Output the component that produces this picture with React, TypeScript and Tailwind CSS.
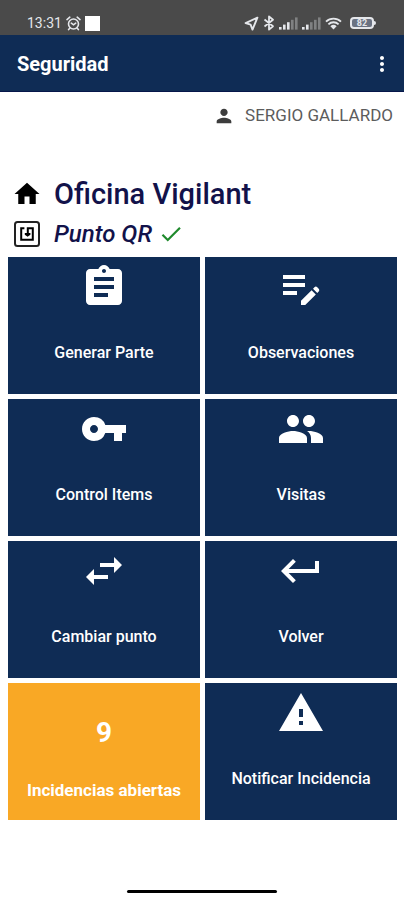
import type { IconType } from 'react-icons';
import {
  MdAssignment,
  MdBluetooth,
  MdCheck,
  MdEditNote,
  MdHome,
  MdKeyboardReturn,
  MdMoreVert,
  MdPeople,
  MdPerson,
  MdSwapHoriz,
  MdVpnKey,
  MdWarning,
} from 'react-icons/md';

interface Action {
  label: string;
  icon: IconType;
}

const actions: Action[] = [
  { label: 'Generar Parte', icon: MdAssignment },
  { label: 'Observaciones', icon: MdEditNote },
  { label: 'Control Items', icon: MdVpnKey },
  { label: 'Visitas', icon: MdPeople },
  { label: 'Cambiar punto', icon: MdSwapHoriz },
  { label: 'Volver', icon: MdKeyboardReturn },
];

function AlarmIcon() {
  return (
    <svg width="15" height="15" viewBox="0 0 15 15" fill="none" stroke="currentColor" strokeWidth="1.6" strokeLinecap="round">
      <circle cx="7.5" cy="8" r="5" />
      <path d="M1 3.6 3.8 1.2M14 3.6 11.2 1.2M3.8 12.2 2.6 13.6M11.2 12.2l1.2 1.4M5.3 7.2l2.2 1.6 2.2-1.6" />
    </svg>
  );
}

function LocationIcon() {
  return (
    <svg width="15" height="15" viewBox="0 0 15 15" fill="none" stroke="currentColor" strokeWidth="1.9" strokeLinejoin="round">
      <path d="M13.4 1.6 1.6 7.2l5 1.4 1.9 5z" />
    </svg>
  );
}

function BluetoothIcon() {
  return (
    <svg width="12" height="16" viewBox="0 0 12 16" fill="none" stroke="currentColor" strokeWidth="1.8" strokeLinejoin="round">
      <path d="M1.5 4.5 10 11.2 6 14.6V1.4l4 3.4-8.5 6.7" />
    </svg>
  );
}

function SignalIcon({ level }: { level: number }) {
  return (
    <svg width="19" height="13" viewBox="0 0 19 13" fill="currentColor">
      {[0, 1, 2, 3, 4].map((i) => (
        <rect key={i} x={i * 4} y={10 - i * 2.4} width="2.6" height={2.6 + i * 2.4} opacity={i < level ? 1 : 0.35} />
      ))}
    </svg>
  );
}

function WifiIcon() {
  return (
    <svg width="17" height="13" viewBox="0 0 17 13" fill="none" stroke="currentColor" strokeWidth="1.8">
      <path d="M1 4.6a11 11 0 0 1 15 0M3.4 7.3a7.4 7.4 0 0 1 10.2 0" />
      <path d="M8.5 12.5 5.4 9.2a4.6 4.6 0 0 1 6.2 0z" fill="currentColor" stroke="none" />
    </svg>
  );
}

function TagIcon() {
  return (
    <svg width="30" height="30" viewBox="0 0 30 30" fill="none" stroke="black" strokeWidth="2">
      <rect x="3" y="3" width="24" height="24" rx="2.5" stroke="#222" />
      <path d="M12.4 9.2H9.2v11.6h11.6V9.2h-5v6" />
      <path d="M12.8 14h5.6v1.8l-2.8 2-2.8-2z" fill="black" stroke="none" />
    </svg>
  );
}

function StatusBar() {
  return (
    <div className="flex h-[35px] items-end justify-between bg-[#4a4a4a] pb-1 pl-[27px] pr-7 text-gray-200">
      <div className="flex h-4 items-center gap-1">
        <span className="text-sm leading-4">13:31</span>
        <AlarmIcon />
        <span className="size-[15px] bg-white" />
      </div>
      <div className="flex h-4 items-center gap-1">
        <LocationIcon />
        <BluetoothIcon />
        <SignalIcon level={3} />
        <SignalIcon level={2} />
        <WifiIcon />
        <div className="ml-1 flex items-center">
          <span className="flex h-3 w-6 items-center justify-center rounded-sm border-2 border-gray-200 bg-gray-500 text-[9px] font-bold leading-3">
            82
          </span>
          <span className="h-1 w-[2px] rounded-r-sm bg-gray-200" />
        </div>
      </div>
    </div>
  );
}

function ActionTile({ label, icon: Icon }: Action) {
  return (
    <button type="button" className="flex h-[137px] flex-col items-center bg-[#0f2c55] pt-1.5 text-white">
      <Icon size={48} />
      <span className="mt-[30px] text-base font-medium leading-6">{label}</span>
    </button>
  );
}

export default function App() {
  return (
    <div className="flex min-h-screen flex-col bg-white font-['Roboto',sans-serif]">
      <StatusBar />
      <header className="flex h-[57px] items-center justify-between border-b border-[#06164a] bg-[#0f2c55] pl-[17px] pr-2.5 pt-px text-white">
        <h1 className="text-xl font-bold">Seguridad</h1>
        <button type="button" aria-label="Más opciones">
          <MdMoreVert size={24} />
        </button>
      </header>

      <main className="flex-1">
        <div className="flex h-12 items-center justify-end gap-2.5 pr-[11px] text-[17px] text-[#5c5c5c]">
          <MdPerson size={22} className="text-[#3c3c3c]" />
          <span>SERGIO GALLARDO</span>
        </div>

        <section className="mt-8 pl-3 text-[#12124a]">
          <div className="flex h-11 items-center gap-3">
            <MdHome size={30} className="text-black" />
            <h2 className="text-[29px] font-medium leading-8">Oficina Vigilant</h2>
          </div>
          <div className="flex h-9 items-center gap-3">
            <TagIcon />
            <h3 className="text-2xl font-medium italic leading-8">Punto QR</h3>
            <MdCheck size={26} className="-ml-1.5 text-[#1f8a2c]" />
          </div>
        </section>

        <div className="mt-[5px] grid grid-cols-2 gap-[5px] pl-2 pr-[7px]">
          {actions.map((action) => (
            <ActionTile key={action.label} {...action} />
          ))}
          <button type="button" className="flex h-[137px] flex-col items-center bg-[#f9a825] pt-[34px] font-bold text-white">
            <span className="text-[28px] leading-8">9</span>
            <span className="mt-[29px] text-[17px] leading-6">Incidencias abiertas</span>
          </button>
          <ActionTile label="Notificar Incidencia" icon={MdWarning} />
        </div>
      </main>

      <div className="mx-auto mb-[7px] h-[3px] w-[37%] rounded-full bg-black" />
    </div>
  );
}
